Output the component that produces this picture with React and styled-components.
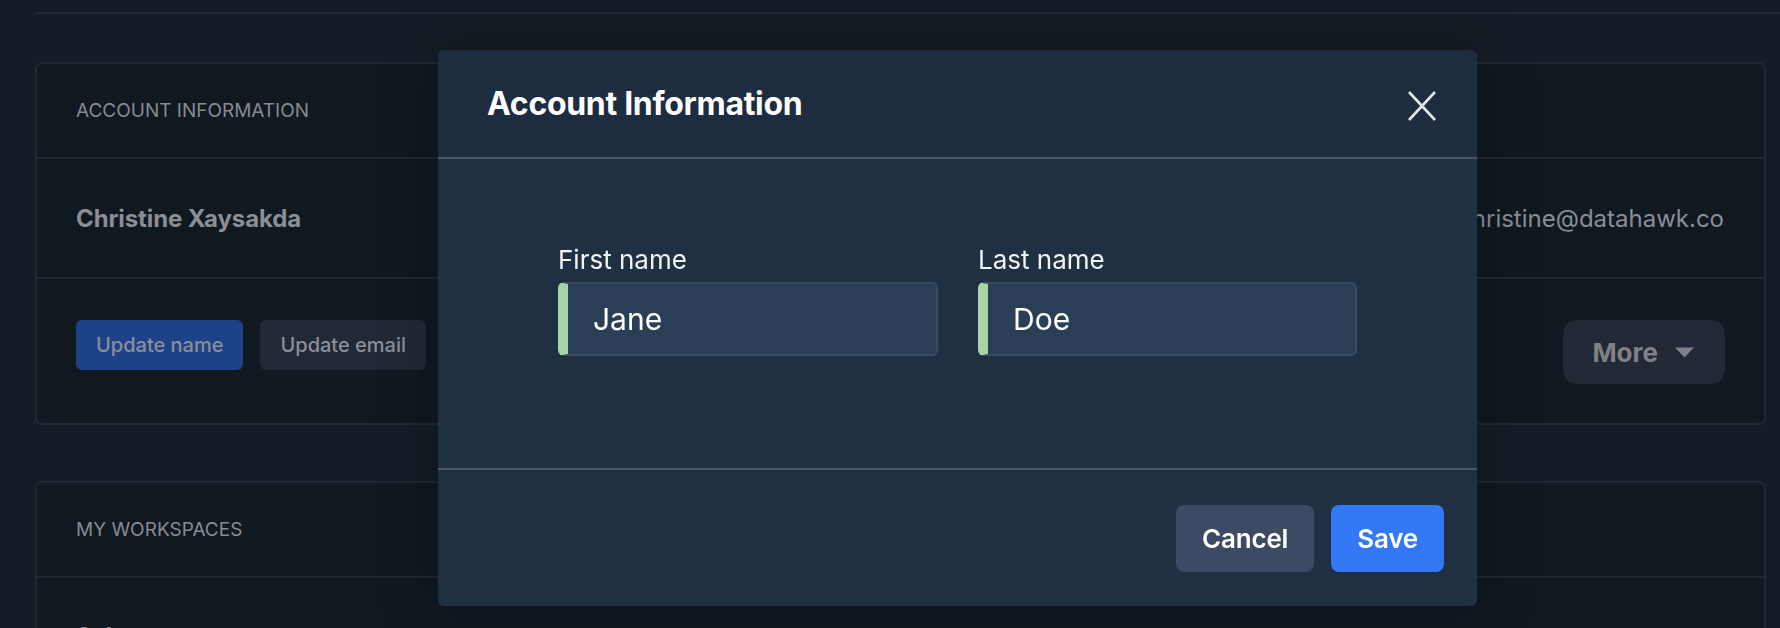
import React from "react";
import styled, { createGlobalStyle } from "styled-components";

const GlobalStyle = createGlobalStyle`
  html, body {
    margin: 0;
    padding: 0;
    overflow: hidden;
    background: #141c25;
    font-family: Inter, "Noto Sans", sans-serif;
  }
  * { box-sizing: border-box; }
`;

const Page = styled.div`
  padding: 12px 14px 0 35px;
  min-height: 628px;
`;

const TopRule = styled.div`
  height: 2px;
  background: #1f2732;
  margin-right: -14px;
  margin-bottom: 48px;
`;

const Card = styled.section`
  background: #101820;
  border: 2px solid #202833;
  border-radius: 7px;
  margin-bottom: 56px;
`;

const CardHeader = styled.div`
  height: 95px;
  display: flex;
  align-items: center;
  padding: 0 39px;
  border-bottom: 2px solid #202833;
  font-size: 19px;
  color: #878b91;
  text-transform: uppercase;
`;

const Row = styled.div`
  display: flex;
  align-items: ${(p) => p.$align || "center"};
  justify-content: space-between;
  padding: ${(p) => p.$pad || "0 40px 0 39px"};
  height: ${(p) => p.$h || "auto"};
  border-bottom: ${(p) => (p.$last ? "none" : "2px solid #202833")};
`;

const Name = styled.div`
  font-size: 24px;
  font-weight: 700;
  letter-spacing: -0.1px;
  color: #8b8e93;
`;

const Email = styled.div`
  font-size: 24px;
  color: #8a8e94;
`;

const ButtonGroup = styled.div`
  display: flex;
  gap: 17px;
`;

const SmallButton = styled.button`
  height: 50px;
  padding: 0 20px;
  border: none;
  border-radius: 6px;
  font-family: inherit;
  font-size: 20px;
  font-weight: 500;
  color: #8a8f98;
  background: ${(p) => (p.$primary ? "#1e4288" : "#222835")};
`;

const MoreButton = styled.button`
  display: flex;
  align-items: center;
  gap: 16px;
  height: 64px;
  padding: 0 30px 0 29px;
  border: none;
  border-radius: 14px;
  background: #222835;
  color: #7e8186;
  font-family: inherit;
  font-size: 26px;
  font-weight: 700;
`;

const Overlay = styled.div`
  position: fixed;
  inset: 0;
  pointer-events: none;
`;

const Modal = styled.div`
  position: absolute;
  left: 438px;
  top: 50px;
  width: 1039px;
  background: #1f3043;
  border-radius: 6px;
  overflow: hidden;
  box-shadow: 0 0 60px rgba(0, 0, 0, 0.25);
  pointer-events: auto;
`;

const ModalHeader = styled.div`
  height: 109px;
  display: flex;
  align-items: center;
  justify-content: space-between;
  padding: 0 41px 0 49px;
  background: #1d2d3f;
  border-bottom: 2px solid #4a5869;
`;

const ModalTitle = styled.h2`
  margin: 0;
  font-size: 32px;
  font-weight: 700;
  letter-spacing: -0.3px;
  color: #ffffff;
`;

const CloseButton = styled.button`
  display: flex;
  padding: 0;
  border: none;
  background: none;
  margin-top: 4px;
`;

const ModalBody = styled.div`
  display: flex;
  justify-content: center;
  padding: 85px 0 112px;
  border-bottom: 2px solid #4a5869;
`;

const Fields = styled.div`
  display: grid;
  grid-template-columns: 380px 379px;
  gap: 40px;
`;

const Field = styled.label`
  display: flex;
  flex-direction: column;
  gap: 7px;
`;

const Label = styled.span`
  font-size: 26px;
  line-height: 31px;
  color: #f2f4f6;
`;

const Input = styled.input`
  height: 74px;
  width: 100%;
  padding: 0 0 0 25px;
  border: 2px solid #3b4a5e;
  border-left: 10px solid #a8d5a5;
  border-radius: 6px;
  background: #2a3f55;
  color: #ffffff;
  font-family: inherit;
  font-size: 30px;
  outline: none;
`;

const ModalFooter = styled.div`
  display: flex;
  justify-content: flex-end;
  gap: 17px;
  padding: 35px 33px 34px;
`;

const FooterButton = styled.button`
  height: 67px;
  padding: 0 26px;
  border: none;
  border-radius: 8px;
  font-family: inherit;
  font-size: 26px;
  font-weight: 600;
  letter-spacing: -0.2px;
  color: #ffffff;
  background: ${(p) => (p.$primary ? "#3478f6" : "#3c4a63")};
`;

const Caret = () => (
  <svg width="21" height="11" viewBox="0 0 21 11">
    <path d="M1 0.5 H20 L10.5 10.5 Z" fill="#7e8186" />
  </svg>
);

const CloseIcon = () => (
  <svg width="28" height="30" viewBox="0 0 28 30">
    <path d="M1 1 L27 29 M27 1 L1 29" stroke="#e4e6e8" strokeWidth="2.6" strokeLinecap="butt" />
  </svg>
);

export default function App() {
  return (
    <>
      <GlobalStyle />
      <Page>
        <TopRule />
        <Card>
          <CardHeader>Account Information</CardHeader>
          <Row $h="120px">
            <Name>Christine Xaysakda</Name>
            <Email>christine@datahawk.co</Email>
          </Row>
          <Row $last $align="flex-start" $pad="41px 39px 0 39px" $h="144px">
            <ButtonGroup>
              <SmallButton $primary>Update name</SmallButton>
              <SmallButton>Update email</SmallButton>
            </ButtonGroup>
            <MoreButton>
              More <Caret />
            </MoreButton>
          </Row>
        </Card>
        <Card>
          <CardHeader>My Workspaces</CardHeader>
          <Row $last $align="flex-start" $pad="44px 39px 0 39px" $h="120px">
            <Name>Sales</Name>
          </Row>
        </Card>
      </Page>
      <Overlay>
        <Modal>
          <ModalHeader>
            <ModalTitle>Account Information</ModalTitle>
            <CloseButton aria-label="Close">
              <CloseIcon />
            </CloseButton>
          </ModalHeader>
          <ModalBody>
            <Fields>
              <Field>
                <Label>First name</Label>
                <Input defaultValue="Jane" />
              </Field>
              <Field>
                <Label>Last name</Label>
                <Input defaultValue="Doe" />
              </Field>
            </Fields>
          </ModalBody>
          <ModalFooter>
            <FooterButton>Cancel</FooterButton>
            <FooterButton $primary>Save</FooterButton>
          </ModalFooter>
        </Modal>
      </Overlay>
    </>
  );
}
